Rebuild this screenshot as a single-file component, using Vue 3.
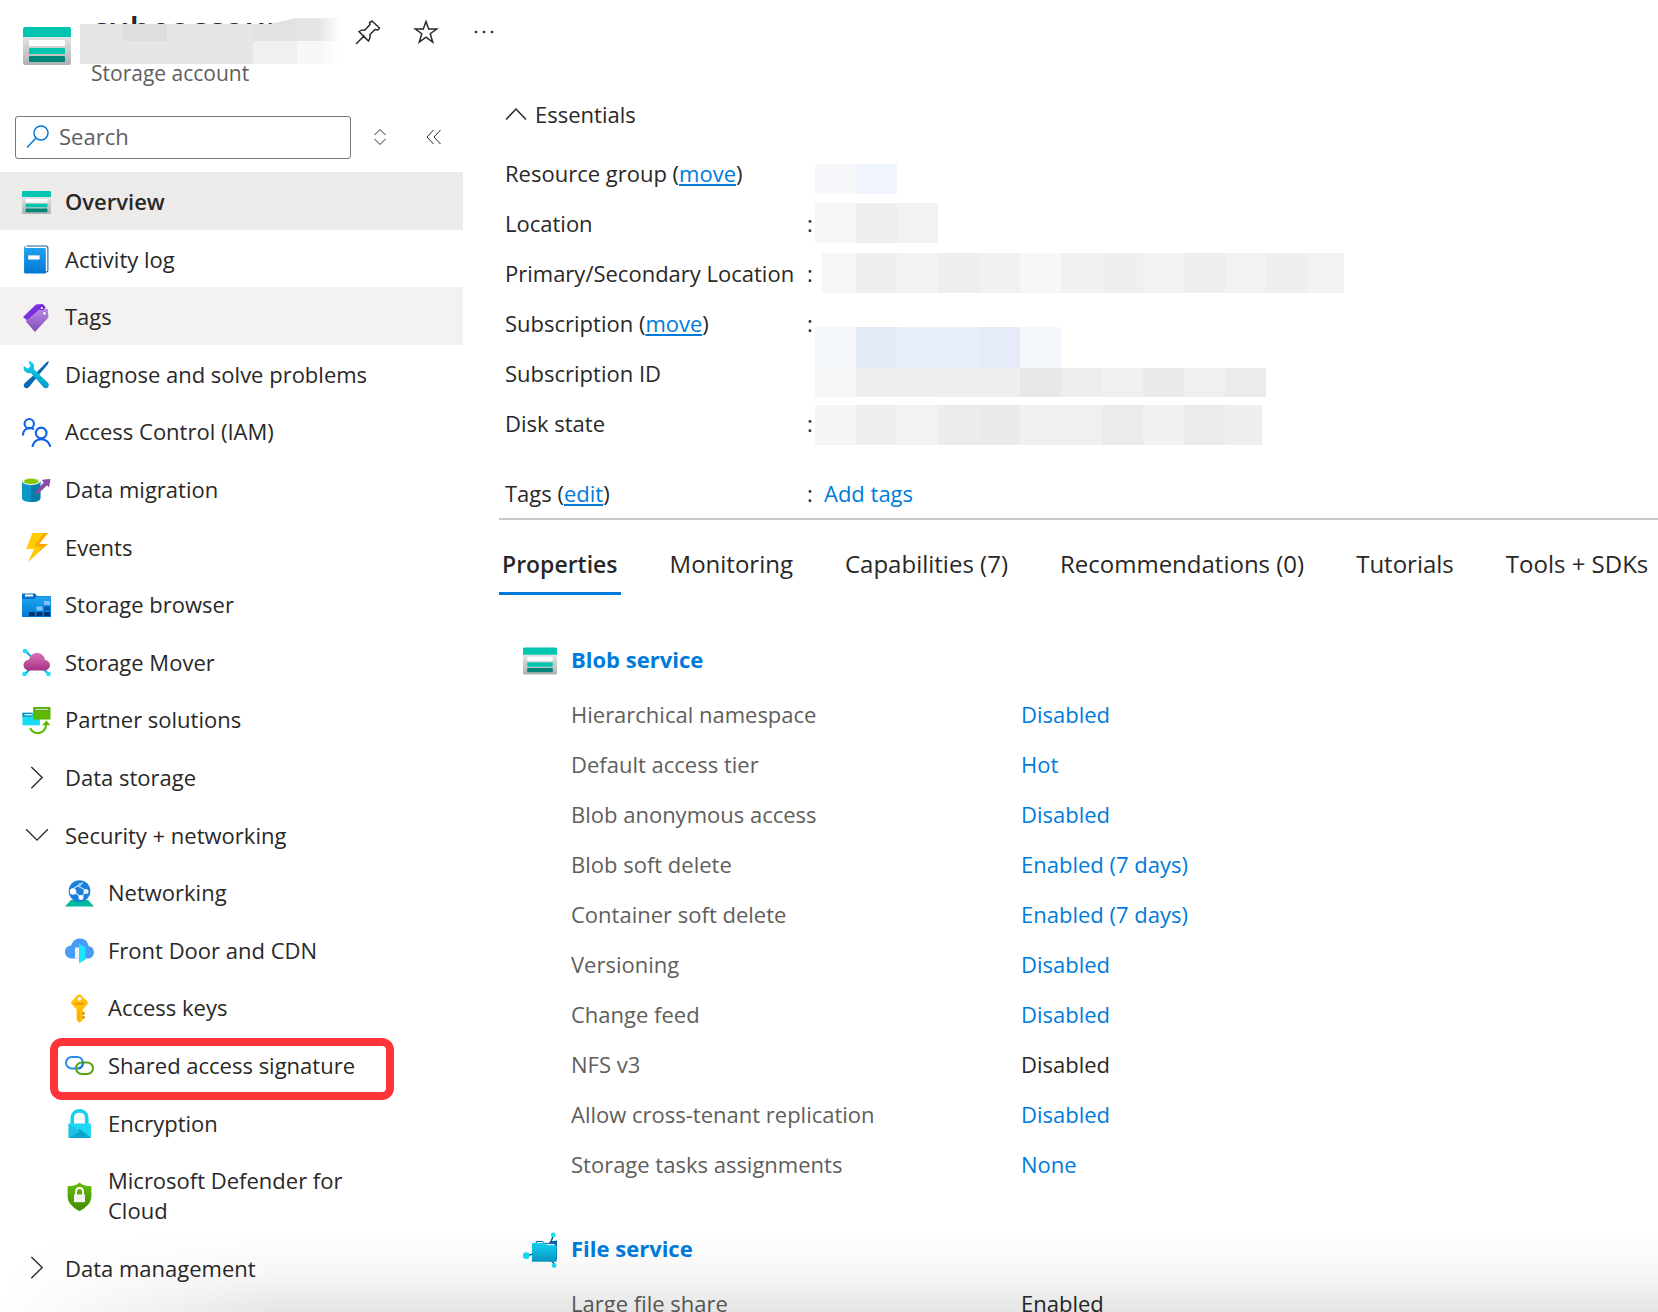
<script setup>
import { ref } from 'vue'

const query = ref('')

const menuItems = [
  { label: 'Overview', icon: 'storage', state: 'selected' },
  { label: 'Activity log', icon: 'log' },
  { label: 'Tags', icon: 'tags', state: 'hovered' },
  { label: 'Diagnose and solve problems', icon: 'tools' },
  { label: 'Access Control (IAM)', icon: 'people' },
  { label: 'Data migration', icon: 'migration' },
  { label: 'Events', icon: 'bolt' },
  { label: 'Storage browser', icon: 'browser' },
  { label: 'Storage Mover', icon: 'mover' },
  { label: 'Partner solutions', icon: 'partner' },
  { label: 'Data storage', icon: 'right' },
  { label: 'Security + networking', icon: 'down' },
  { label: 'Networking', icon: 'network', child: true },
  { label: 'Front Door and CDN', icon: 'door', child: true },
  { label: 'Access keys', icon: 'key', child: true },
  { label: 'Shared access signature', icon: 'link', child: true, marked: true },
  { label: 'Encryption', icon: 'lock', child: true },
  { label: 'Microsoft Defender for Cloud', icon: 'shield', child: true, tall: true },
  { label: 'Data management', icon: 'right' },
]

const essentials = [
  { label: 'Resource group', action: 'move', cells: ['#f5f7fb', '#f1f5fe'], shape: 'short', noColon: true },
  { label: 'Location', cells: ['#f6f6f6', '#ededed', '#f2f2f2'], shape: 'full' },
  {
    label: 'Primary/Secondary Location',
    cells: ['#f6f6f6', '#efefef', '#f3f3f3', '#eeeeee', '#f1f1f1', '#f7f7f7', '#f1f1f1', '#efefef', '#f3f3f3', '#ededed', '#f2f2f2', '#efefef', '#f2f2f2'],
    shape: 'inset',
  },
  { label: 'Subscription', action: 'move', cells: ['#f4f7fc', '#e4ebf8', '#e8effa', '#e7effa', '#e5ecf8', '#f4f8fc'], shape: 'low' },
  {
    label: 'Subscription ID',
    cells: ['#f6f6f6', '#ededed', '#eeeeee', '#efefef', '#efefef', '#e8e8e8', '#ededed', '#f0f0f0', '#eaeaea', '#f0f0ee', '#ebebeb'],
    shape: 'under', noColon: true,
  },
  {
    label: 'Disk state',
    cells: ['#f5f5f5', '#eeeeee', '#f2f2f2', '#ececec', '#eaeaea', '#f0f0f0', '#f0f0ee', '#ebebeb', '#f1f1f1', '#ebebeb', '#efefef'],
    shape: 'last',
  },
]

const tabs = ['Properties', 'Monitoring', 'Capabilities (7)', 'Recommendations (0)', 'Tutorials', 'Tools + SDKs']

const services = [
  {
    name: 'Blob service',
    icon: 'storage',
    rows: [
      ['Hierarchical namespace', 'Disabled', true],
      ['Default access tier', 'Hot', true],
      ['Blob anonymous access', 'Disabled', true],
      ['Blob soft delete', 'Enabled (7 days)', true],
      ['Container soft delete', 'Enabled (7 days)', true],
      ['Versioning', 'Disabled', true],
      ['Change feed', 'Disabled', true],
      ['NFS v3', 'Disabled', false],
      ['Allow cross-tenant replication', 'Disabled', true],
      ['Storage tasks assignments', 'None', true],
    ],
  },
  { name: 'File service', icon: 'file', rows: [['Large file share', 'Enabled', false]] },
]
</script>

<template>
  <div class="page">
    <svg class="defs" aria-hidden="true">
      <defs>
        <linearGradient id="gGrey" x1="0" y1="0" x2="0" y2="1"><stop offset="0" stop-color="#e6e6e6" /><stop offset="1" stop-color="#b0b0b0" /></linearGradient>
        <linearGradient id="gBlue" x1="0" y1="0" x2="0" y2="1"><stop offset="0" stop-color="#22a5f1" /><stop offset="1" stop-color="#0078d4" /></linearGradient>
        <linearGradient id="gPurple" x1="0" y1="0" x2="0" y2="1"><stop offset="0" stop-color="#c08be8" /><stop offset="1" stop-color="#7b4bb8" /></linearGradient>
        <linearGradient id="gCyan" x1="0" y1="0" x2="0" y2="1"><stop offset="0" stop-color="#12d3f2" /><stop offset="1" stop-color="#0799c8" /></linearGradient>
        <linearGradient id="gPink" x1="0" y1="0" x2="0" y2="1"><stop offset="0" stop-color="#d873ba" /><stop offset="1" stop-color="#a93084" /></linearGradient>
        <linearGradient id="gGreen" x1="0" y1="0" x2="0" y2="1"><stop offset="0" stop-color="#67bd08" /><stop offset="1" stop-color="#3f8d00" /></linearGradient>
        <symbol id="i-storage" viewBox="0 0 48 48">
          <path d="M0 14h48v27a2 2 0 0 1-2 2H2a2 2 0 0 1-2-2z" fill="url(#gGrey)" />
          <path d="M2 5h44a2 2 0 0 1 2 2v8H0V7a2 2 0 0 1 2-2z" fill="#00c6b1" />
          <rect x="6" y="18" width="36" height="6" rx="1" fill="#fff" />
          <rect x="6" y="26" width="36" height="6" rx="1" fill="#00c6b1" />
          <rect x="6" y="34" width="36" height="6" rx="1" fill="#008578" />
        </symbol>
        <symbol id="i-log" viewBox="0 0 28 28">
          <path d="M4.500 1H23a2 2 0 0 1 2 2V24.500a1.500 1.500 0 0 1-1.500 1.500H22" fill="#fff" stroke="#185a9b" />
          <path d="M3 3h19a1 1 0 0 1 1 1V27.500H3.500A1.500 1.500 0 0 1 2 26V2.500a2 2 0 0 1 2-1.700" fill="url(#gBlue)" />
          <rect x="6" y="10" width="11" height="4" fill="#fff" />
        </symbol>
        <symbol id="i-tags" viewBox="0 0 28 28">
          <path d="M1 13.500 13.500 1.500 20 1l3 3-14 16z" fill="#7b2fe0" />
          <path d="M3.500 17.500 17 6l8-.5.500 8.500L12.500 28z" fill="url(#gPurple)" />
          <circle cx="19" cy="5" r="1.600" fill="#fff" stroke="#5b1fa8" /><circle cx="21.700" cy="10" r="1.800" fill="#fff" stroke="#7a4ab5" stroke-width=".7" />
        </symbol>
        <symbol id="i-tools" viewBox="0 0 28 28">
          <path d="M26 1 24 2 12 14l-9 8c-2 2-1.500 3.500-.5 4.500s2.700 1.300 4.500-.7L15 16 25 4z" fill="#0b69b3" />
          <path d="M6 1.500c3-.7 6 1.700 5.700 5L11.500 9 25 22c1.500 1.500 1 3.500 0 4.500s-3 1-4.200-.3L8.500 12.500C5 13.500 1.300 11 1.500 7l.3-1.300L5.500 8.500l2.700-2.800z" fill="url(#gCyan)" />
        </symbol>
        <symbol id="i-people" viewBox="0 0 28 28">
          <g fill="none" stroke="#0f62e6" stroke-width="2"><circle cx="7" cy="5.500" r="4.500" /><path d="M1 17v-1a6.500 6.500 0 0 1 10.500-5" /><circle cx="18.500" cy="14.500" r="5.200" /><path d="M10 28c1-5 4.500-7.500 8.500-7.500S26 23 27.500 28" /></g>
        </symbol>
        <symbol id="i-migration" viewBox="0 0 30 28">
          <path d="M0 4.500V22c0 2.500 4.500 4 9.500 4s9.500-1.500 9.500-4V4.500z" fill="#0a97c8" /><path d="M9.500 4.500H19V22c0 2.500-4.500 4-9.500 4z" fill="#067ba8" />
          <ellipse cx="9.500" cy="4.500" rx="9.500" ry="4" fill="#e8f1e2" /><ellipse cx="9.500" cy="4.600" rx="7.500" ry="2.800" fill="#86c800" />
          <path d="m14 16 1.500 2L26 8l1.500 2L29 2.500l-8 1 2 2z" fill="#8a4aa5" stroke="#8a4aa5" />
        </symbol>
        <symbol id="i-bolt" viewBox="0 0 28 28">
          <path d="M10 0h15l-8.500 10.500H25L6 28l5.500-12.500H4z" fill="#ffcb05" /><path d="m21 0h4l-8.500 10.500H25L16 18l3-5h-7z" fill="#ffa800" />
        </symbol>
        <symbol id="i-browser" viewBox="0 0 29 28">
          <path d="M0 3a1 1 0 0 1 1-1h12l2 2.500h13a1 1 0 0 1 1 1V10H0z" fill="#0070c9" /><rect x="3" y="3" width="8" height="2" fill="#fff" />
          <path d="M0 7.500h12l3-2.500h14v20.500H0z" fill="url(#gBlue)" />
          <path d="M22 9.500h6v4h-6zM14.500 15h6v4h-6z" fill="#7fc0ff" /><path d="M22 15h6v4h-6z" fill="#0057ad" /><path d="M7 20.500h6v4H7zM14.500 20.500h6v4h-6zM22 20.500h6v4h-6z" fill="#003472" />
        </symbol>
        <symbol id="i-mover" viewBox="0 0 29 28">
          <path d="M3 2 9 8M3 26l5-6M21 20l6 6" stroke="#10a8cf" stroke-width="2" /><g fill="#22dff5"><circle cx="3" cy="2.500" r="2.300" /><circle cx="2.500" cy="25.500" r="2.300" /><circle cx="26.500" cy="25.500" r="2.300" /></g>
          <path d="M7.500 22C4 22 1.500 19.500 1.500 16.500S4 11.500 7 11.200C8 7 11 4.500 15 4.500c4.300 0 7.500 2.700 8 7 3 .3 5 2.500 5 5.200S25.500 22 22 22z" fill="url(#gPink)" />
        </symbol>
        <symbol id="i-partner" viewBox="0 0 29 30">
          <path d="M0 7h18v13H0z" fill="#19dcf2" /><path d="M0 7h10v4H0z" fill="#0b86bd" /><path d="M2 8.300h8v1.400H2z" fill="#d8f5ff" />
          <path d="M11 1h18v13H11z" fill="#5cb800" /><path d="M13 2.500h14v2H13z" fill="#d7eec0" stroke="#3c8200" stroke-width=".6" />
          <path d="M8 23c3.500 7 14.500 7 16.500-3" fill="none" stroke="#5cb800" stroke-width="2.200" /><path d="m20 20 4.800-5 4 5z" fill="#5cb800" />
        </symbol>
        <symbol id="i-right" viewBox="0 0 28 28"><path d="m9 3 10.500 10L9 23.500" fill="none" stroke="#292827" stroke-width="1.300" /></symbol>
        <symbol id="i-down" viewBox="0 0 28 28"><path d="m4 8 10.500 10.500L25 8" fill="none" stroke="#292827" stroke-width="1.300" /></symbol>
        <symbol id="i-network" viewBox="0 0 29 28">
          <path d="M6 20.500h17l6 6.500H0z" fill="#00b8a0" /><circle cx="14.500" cy="11.500" r="10.800" fill="#1a7fdc" />
          <path d="M7 10 18 3M7 10l10 9M21 11l-9-5M16 19l5-8" stroke="#b8dcff" stroke-width="1.300" /><circle cx="8" cy="12" r="3.200" fill="#fff" /><circle cx="21" cy="12" r="2.500" fill="#eaf4ff" /><circle cx="16" cy="18" r="2.500" fill="#fff" /><circle cx="15" cy="5" r="1.500" fill="#9ccfff" />
        </symbol>
        <symbol id="i-door" viewBox="0 0 29 28">
          <path d="M7 22C3 22 0 19.500 0 15.500s3-6.300 6.200-6.500C7.500 4.500 10.700 2 15 2c4.700 0 8 3 8.500 7.500 3.200.3 5.500 3 5.500 6.200S26.500 22 23 22z" fill="#459df5" />
          <path d="M10 11h5v11h-5z" fill="#f2f2f2" /><path d="m14 7 6.500 4v12L14 27z" fill="#20e5fa" />
        </symbol>
        <symbol id="i-key" viewBox="0 0 28 30">
          <path d="M11.500 1.500c1.500-1.300 3-1.300 4.500 0l6 6c1 1 1 2 .2 3L17.500 16v11L14 30l-3-3V16L6 10.500c-1-1-1-2 0-3z" fill="#ffbe0b" /><circle cx="14" cy="5" r="1.900" fill="#fff" /><path d="M9.500 10h9" stroke="#e39300" stroke-width="1.500" /><path d="M13.500 17v10M17.500 19h1.300v2h-1.300zM17.500 23h1.300v2h-1.300z" stroke="#f49c00" />
        </symbol>
        <symbol id="i-link" viewBox="0 0 29 28">
          <rect x="1" y="4.500" width="17" height="11.500" rx="5.700" fill="none" stroke="#2d8ceb" stroke-width="2" /><rect x="11" y="10" width="17" height="11.500" rx="5.700" fill="none" stroke="#56a50f" stroke-width="2" /><path d="M18 10c0 3-1.500 6-5 6" fill="none" stroke="#1377d6" stroke-width="2" />
        </symbol>
        <symbol id="i-lock" viewBox="0 0 28 28">
          <path d="M7 15V8.500c0-9 14-9 14 0V15" fill="none" stroke="#1bcdf1" stroke-width="3.500" /><path d="M3.500 14H25v14H3.500z" fill="#1fd7f5" /><path d="m3.500 28 10.700-9L25 28z" fill="#0ba4cf" /><path d="m3.500 14 10.700 8L3.500 28z" fill="#20bfe3" />
        </symbol>
        <symbol id="i-shield" viewBox="0 0 28 28">
          <path d="M14 .5c3.500 3 7.500 3.500 11.500 3.500v9.500c0 7-5 11-11.500 14.500C7.500 24.500 2.500 20.500 2.500 13.500V4C6.500 4 10.500 3.500 14 .5z" fill="url(#gGreen)" /><path d="M10.700 13V9.500c0-5 6.700-5 6.700 0V13" fill="none" stroke="#fff" stroke-width="1.800" /><path d="M8.700 12h10.600v7.500H8.700z" fill="#f3f3f3" />
        </symbol>
        <symbol id="i-file" viewBox="0 0 36 38">
          <path d="m32 4-3 8M4 25l8-2M29 29l5 6" stroke="#0b4f8f" stroke-width="1.500" /><path d="m28 10 8-1v20h-8z" fill="#0a5ca8" /><path d="M14 10h7l2 2h11v4H14z" fill="#dbeefa" stroke="#0b5ca0" />
          <path d="M9.500 11.500H22l4 2.500h9.500v17.500h-26z" fill="url(#gCyan)" /><g fill="#0ee0f7"><circle cx="32" cy="3" r="2.500" /><circle cx="3.500" cy="25" r="3.500" /><circle cx="33" cy="35.500" r="2.500" /></g>
        </symbol>
      </defs>
    </svg>

    <header class="header">
      <svg class="logo"><use href="#i-storage" /></svg>
      <div class="heading">
        <h1>cubeaccount</h1>
        <div class="veil"><i v-for="n in 12" :key="n"></i></div>
        <p>Storage account</p>
      </div>
      <div class="actions">
        <button aria-label="Pin"><svg width="26" height="26" viewBox="0 0 26 26"><path d="m1 25 8.500-8.500M17 2l7.500 7-1.500 2-3-.5-5 5c.5 3 0 4.500-1.500 6.500L4 12.500c2-1.500 4-1.800 6-1.500l5-5.500-.5-2z" /></svg></button>
        <button aria-label="Favorite"><svg width="26" height="26" viewBox="0 0 26 26"><path d="m13 2.500 2.700 7.500h8l-6.500 4.700 2.500 8.300-6.700-4.900L6.300 23l2.500-8.300L2.300 10h8z" /></svg></button>
        <button aria-label="More"><svg width="26" height="26" viewBox="0 0 26 26"><g class="dots"><circle cx="5" cy="13" r="1.300" /><circle cx="13" cy="13" r="1.300" /><circle cx="21" cy="13" r="1.300" /></g></svg></button>
      </div>
    </header>

    <div class="columns">
      <aside class="sidebar">
        <div class="tools">
          <label class="search">
            <svg width="24" height="24" viewBox="0 0 24 24"><circle cx="15" cy="8" r="7" /><path d="M10 13 1 22.500" /></svg>
            <input v-model="query" type="text" placeholder="Search" aria-label="Search" />
          </label>
          <button class="expand" aria-label="Expand all"><svg width="16" height="18" viewBox="0 0 16 18"><path d="m2.500 7 5.500-5.500L13.500 7M2.500 11l5.500 5.500 5.500-5.500" /></svg></button>
          <button class="collapse" aria-label="Collapse menu"><svg width="16" height="16" viewBox="0 0 16 16"><path d="M7.500 1 1 8l6.500 7M14.500 1 8 8l6.500 7" /></svg></button>
        </div>
        <nav>
          <a v-for="item in menuItems" :key="item.label" href="#" class="item" :class="[item.state, { child: item.child, tall: item.tall, marked: item.marked }]">
            <svg class="icon"><use :href="'#i-' + item.icon" /></svg>
            <span>{{ item.label }}</span>
          </a>
        </nav>
      </aside>

      <main>
        <button class="toggle"><svg width="22" height="14" viewBox="0 0 22 14"><path d="M1 12.500 11 2l10 10.500" /></svg>Essentials</button>
        <dl class="essentials">
          <div v-for="row in essentials" :key="row.label" class="fact">
            <dt>{{ row.label }}<template v-if="row.action"> (<a href="#">{{ row.action }}</a>)</template></dt>
            <dd>
              <span class="colon">{{ row.noColon ? '' : ':' }}</span>
              <span class="mosaic" :class="row.shape"><i v-for="(c, n) in row.cells" :key="n" :style="{ background: c }"></i></span>
            </dd>
          </div>
          <div class="fact tagrow">
            <dt>Tags (<a href="#">edit</a>)</dt>
            <dd><span class="colon">:</span><a href="#" class="plain">Add tags</a></dd>
          </div>
        </dl>

        <div class="tabs" role="tablist">
          <button v-for="(tab, n) in tabs" :key="tab" role="tab" :aria-selected="n === 0">{{ tab }}</button>
        </div>

        <section v-for="s in services" :key="s.name" class="service">
          <h2><svg><use :href="'#i-' + s.icon" /></svg><a href="#">{{ s.name }}</a></h2>
          <table>
            <tbody>
              <tr v-for="r in s.rows" :key="r[0]">
                <th scope="row">{{ r[0] }}</th>
                <td><a v-if="r[2]" href="#">{{ r[1] }}</a><template v-else>{{ r[1] }}</template></td>
              </tr>
            </tbody>
          </table>
        </section>
      </main>
    </div>
    <div class="shade"></div>
  </div>
</template>

<style>
body { margin: 0; background: #fff; }
</style>

<style scoped>
.page { position: relative; height: 100vh; overflow: hidden; color: #292827; font-family: "Open Sans", "Noto Sans", sans-serif; font-size: 22px; line-height: 30px; }
.defs { position: absolute; width: 0; height: 0; }
a { color: #007bdc; }
button { border: 0; padding: 0; background: none; color: inherit; font: inherit; }
button svg, .search svg { display: block; fill: none; stroke: #292827; stroke-width: 1.500; }

.header { display: flex; height: 115px; box-sizing: border-box; padding-left: 23px; }
.logo { width: 48px; height: 48px; margin-top: 22px; }
.heading { position: relative; width: 260px; margin-left: 20px; }
.heading h1 { margin: 9px 0 0; font-size: 34px; line-height: 40px; font-weight: 600; }
.heading p { margin: 9px 0 0; color: #605e5c; font-size: 21px; }
.veil { position: absolute; left: -11px; top: 18px; width: 260px; height: 46px; display: grid; grid-template-columns: repeat(6, 1fr); background: #e4e4e4; clip-path: polygon(0 6px, 190px 6px, 216px 0, 100% 0, 100% 100%, 0 100%); mask-image: linear-gradient(to right, #000 240px, transparent); }
.veil i { background: #e6e6e6; }
.veil i:nth-child(2) { background: #dedede; }
.veil i:nth-child(5) { background: #e2e2e2; }
.veil i:nth-child(11) { background: #f0f0f0; }
.veil i:nth-child(12) { background: #f8f8f8; }
.actions { display: flex; align-items: center; gap: 32px; height: 64px; margin-left: 4px; }
.dots circle { fill: #292827; stroke: none; }

.columns { display: flex; }
.sidebar { flex: none; width: 463px; }
.tools { display: flex; align-items: center; height: 44px; padding: 0 0 13px 15px; }
.search { display: flex; align-items: center; gap: 9px; box-sizing: border-box; width: 336px; height: 43px; padding-left: 10px; border: 1px solid #7a7876; border-radius: 3px; }
.search svg { stroke: #0078d4; }
.search input { flex: 1; min-width: 0; border: 0; padding: 0 0 2px; outline: 0; background: none; font: inherit; color: inherit; }
.search input::placeholder { color: #605e5c; opacity: 1; }
.expand { margin-left: 21px; }
.collapse { margin-left: 38px; }
.tools button svg { stroke-width: 1; }

.item { position: relative; display: flex; align-items: center; gap: 14px; box-sizing: border-box; height: 58px; padding: 0 80px 0 22px; color: #292827; text-decoration: none; }
.item:nth-child(5n + 2), .item:nth-child(5n + 4) { height: 57px; }
.item.child { padding-left: 65px; }
.item.tall { height: 88px; }
.icon { flex: none; width: 29px; height: 29px; margin-top: 2px; }
.selected { background: #edebe9; font-weight: 600; }
.hovered { background: #f3f2f1; }
.marked::after { content: ""; position: absolute; left: 50px; top: 2px; width: 328px; height: 46px; border: 8px solid #ff333a; border-radius: 12px; }

main { flex: 1; min-width: 0; padding-left: 36px; }
.toggle { display: flex; align-items: center; gap: 8px; height: 30px; margin: -16px 0 0 6px; }
.essentials { margin: 19px 0 0; border-bottom: 2px solid #c8c8c8; }
.fact { display: flex; align-items: center; height: 50px; padding-left: 6px; }
.fact dt { flex: none; width: 302px; white-space: nowrap; }
.fact dd { display: flex; align-items: center; margin: 0; height: 50px; }
.colon { width: 8px; }
.plain { margin-left: 9px; text-decoration: none; }
.tagrow { margin-top: 20px; }
.mosaic { display: flex; align-items: flex-start; height: 50px; }
.mosaic i { width: 41px; height: 40px; margin-top: 5px; }
.short i { height: 30px; margin-top: 16px; }
.inset i:first-child { width: 34px; margin-left: 7px; }
.inset i:last-child, .last i:last-child { width: 37px; }
.low i { height: 42px; margin-top: 29px; }
.under i { height: 29px; margin-top: 20px; }
.last i { margin-top: 7px; }

.tabs { display: flex; gap: 46px; }
.tabs button { height: 75px; padding: 16px 3px 0; border-bottom: 3px solid transparent; box-sizing: border-box; font-size: 24px; white-space: nowrap; }
.tabs button[aria-selected="true"] { border-color: #007bdc; font-size: 23px; font-weight: 600; }

.service { padding: 44px 0 0 24px; }
.service + .service { padding-top: 39px; }
.service h2 { display: flex; align-items: center; gap: 14px; height: 40px; margin: 0 0 10px; font-size: 22px; font-weight: 700; }
.service h2 svg { width: 34px; height: 36px; margin-top: 4px; }
.service a { text-decoration: none; }
table { border-collapse: collapse; margin-left: 48px; }
th, td { height: 50px; padding: 0; text-align: left; font-weight: 400; }
th { width: 450px; color: #605e5c; }
.shade { position: absolute; left: 0; right: 0; bottom: 0; height: 80px; pointer-events: none; background: linear-gradient(to bottom, transparent, rgba(0, 0, 0, 0.03) 50%, rgba(0, 0, 0, 0.1)); mask-image: linear-gradient(to right, transparent, #000 280px); }
</style>
